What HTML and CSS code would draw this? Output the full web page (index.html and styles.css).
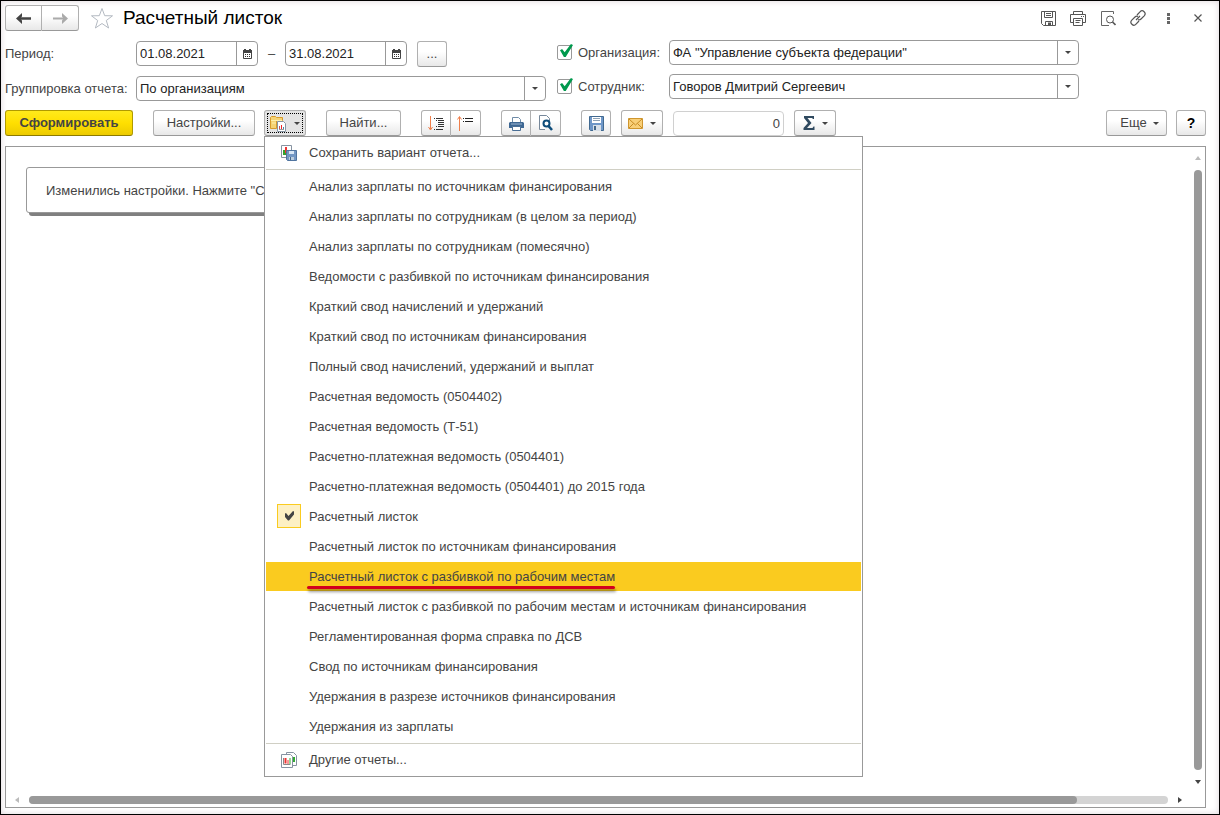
FILE: index.html
```html
<!DOCTYPE html>
<html lang="ru">
<head>
<meta charset="utf-8">
<title>Расчетный листок</title>
<link rel="stylesheet" href="styles.css">
</head>
<body>
<svg class="defs" width="0" height="0" aria-hidden="true">
  <defs>
    <symbol id="calendar" viewBox="0 0 9 10"><path d="M.5 1.500h8v8h-8z" fill="#fff" stroke="#444"/><path d="M0 1h9v3H0z" fill="#444"/><path d="M1 0h2v2H1zM6 0h2v2H6z" fill="#444"/><path d="M2 5h1v1H2zM4 5h1v1H4zM6 5h1v1H6zM2 7h1v1H2zM4 7h1v1H4zM6 7h1v1H6z" fill="#333"/></symbol>
    <symbol id="floppy" viewBox="0 0 15 15"><path d="M.5.5h14v14h-12l-2-2zM3.500.5v6h8v-6M5 2.500h5M5 4.500h5M4.500 14.500v-4h7v4" fill="none" stroke="#555"/><path d="M7 11.500h3v3H7z" fill="#555"/></symbol>
    <symbol id="print-line" viewBox="0 0 16 15"><path d="M3.500 3.500v-3h9v3M3.500 11.500h-3v-8h15v8h-3M3.500 7.500h9v7h-9zM5.500 9.500h5M5.500 11.500h4M11 5.500h1M13 5.500h1" fill="none" stroke="#555"/></symbol>
    <symbol id="preview-line" viewBox="0 0 15 15"><path d="M12.500 3V.5H.5v14H8" fill="none" stroke="#666"/><circle cx="9" cy="8.500" r="3.500" fill="none" stroke="#555"/><path d="M11.500 11l3 3" stroke="#555" stroke-width="1.600"/></symbol>
    <symbol id="link" viewBox="0 0 16 16"><g fill="none" stroke="#555" stroke-width="1.200"><path d="M7 5l3-3.200a2.800 2.800 0 0 1 4.200 4L11 9a2.800 2.800 0 0 1-3 .6"/><path d="M9 11l-3 3.200a2.800 2.800 0 0 1-4.200-4L5 7a2.800 2.800 0 0 1 3-.6M6 10l4-4"/></g></symbol>
  </defs>
</svg>
<main class="window">
  <header class="titlebar">
    <div class="pair nav">
      <button class="btn" aria-label="Назад"><svg width="15" height="11" viewBox="0 0 15 11"><path d="M6 0L0 5.500 6 11 6 7.500 5 6.800H15V4.200H5L6 3.500z" fill="#444"/></svg></button>
      <button class="btn" aria-label="Вперед"><svg width="15" height="11" viewBox="0 0 15 11"><path d="M9 0L15 5.500 9 11 9 7.500 10 6.500H0V4.500H10L9 3.500z" fill="#aaa"/></svg></button>
    </div>
    <button class="plain star" aria-label="Избранное"><svg width="24" height="23" viewBox="0 0 24 23"><path d="M12 1.500l2.700 7.200 7.800.1-6.200 4.700 2.300 7.500L12 16.500 5.400 21l2.300-7.500L1.500 8.800l7.800-.1z" fill="#fff" stroke="#b4bac2"/></svg></button>
    <h1 class="title">Расчетный листок</h1>
    <div class="tools">
      <button class="plain" aria-label="Сохранить"><svg width="15" height="15"><use href="#floppy"/></svg></button>
      <button class="plain" aria-label="Печать"><svg width="16" height="15"><use href="#print-line"/></svg></button>
      <button class="plain" aria-label="Просмотр"><svg width="15" height="15"><use href="#preview-line"/></svg></button>
      <button class="plain" aria-label="Ссылка"><svg width="16" height="16"><use href="#link"/></svg></button>
      <button class="plain" aria-label="Меню"><svg width="3" height="11" viewBox="0 0 3 11"><path d="M0 0h3v3H0zM0 4h3v3H0zM0 8h3v3H0z" fill="#666"/></svg></button>
      <button class="plain" aria-label="Закрыть"><svg width="8" height="8" viewBox="0 0 8 8"><path d="M.5.5l7 7M7.500.5l-7 7" stroke="#555" stroke-width="1.200"/></svg></button>
    </div>
  </header>

  <form class="form">
    <div class="column left">
      <div class="row">
        <label class="caption" for="from">Период:</label>
        <span class="field date"><input id="from" type="text" value="01.08.2021"><button type="button" class="field-btn" aria-label="Календарь"><svg width="9" height="10"><use href="#calendar"/></svg></button></span>
        <span class="dash">–</span>
        <span class="field date"><input type="text" value="31.08.2021" aria-label="Конец периода"><button type="button" class="field-btn" aria-label="Календарь"><svg width="9" height="10"><use href="#calendar"/></svg></button></span>
        <button type="button" class="btn dots">...</button>
      </div>
      <div class="row">
        <label class="caption" for="group">Группировка отчета:</label>
        <span class="field combo"><select id="group"><option>По организациям</option></select><span class="drop"><i class="arrow"></i></span></span>
      </div>
    </div>
    <div class="column right">
      <div class="row">
        <input class="tick" type="checkbox" id="use-org" checked>
        <label class="caption" for="use-org">Организация:</label>
        <span class="field combo"><select aria-label="Организация"><option>ФА "Управление субъекта федерации"</option></select><span class="drop"><i class="arrow"></i></span></span>
      </div>
      <div class="row">
        <input class="tick" type="checkbox" id="use-emp" checked>
        <label class="caption" for="use-emp">Сотрудник:</label>
        <span class="field combo"><select aria-label="Сотрудник"><option>Говоров Дмитрий Сергеевич</option></select><span class="drop"><i class="arrow"></i></span></span>
      </div>
    </div>
  </form>

  <div class="toolbar">
    <button class="btn primary">Сформировать</button>
    <div class="group near">
      <button class="btn settings">Настройки...</button>
      <div class="variants">
        <button class="btn split pressed" aria-label="Варианты отчета" aria-expanded="true">
          <svg width="17" height="17" viewBox="0 0 17 17"><path d="M.5 2.500l1-1h4l1 1h6v3h-6v8h-6z" fill="#f5d373" stroke="#d69b2c"/><path d="M1 5.500h11M2 8h4" stroke="#fff0ad"/><path d="M7.500 6.500h6l2 2v8h-8z" fill="#fff" stroke="#8795a3"/><path d="M9.500 11v3" stroke="#c55"/><path d="M11.500 10v4" stroke="#e22"/><path d="M13.500 12v2" stroke="#48a"/><path d="M9 14.500h5" stroke="#999"/></svg>
          <i class="arrow"></i>
        </button>
        <div class="menu" role="menu">
          <button class="item edge" role="menuitem"><svg width="17" height="17" viewBox="0 0 17 17"><path d="M.5.5h10v12H.5z" fill="#fff" stroke="#8793a1"/><path d="M2 5h3v5H2z" fill="#35a22c"/><path d="M4 2h2v6H4z" fill="#e33"/><path d="M5.500 5.500h10v10h-9l-1-1z" fill="#7397c4" stroke="#50749f"/><path d="M8 6h5v3H8z" fill="#d9e7f5"/><path d="M8 12h5v3H8z" fill="#bccddd"/><path d="M9 12h1v3H9z" fill="#456789"/></svg>Сохранить вариант отчета...</button>
          <div class="list">
            <button class="item" role="menuitem">Анализ зарплаты по источникам финансирования</button>
            <button class="item" role="menuitem">Анализ зарплаты по сотрудникам (в целом за период)</button>
            <button class="item" role="menuitem">Анализ зарплаты по сотрудникам (помесячно)</button>
            <button class="item" role="menuitem">Ведомости с разбивкой по источникам финансирования</button>
            <button class="item" role="menuitem">Краткий свод начислений и удержаний</button>
            <button class="item" role="menuitem">Краткий свод по источникам финансирования</button>
            <button class="item" role="menuitem">Полный свод начислений, удержаний и выплат</button>
            <button class="item" role="menuitem">Расчетная ведомость (0504402)</button>
            <button class="item" role="menuitem">Расчетная ведомость (Т-51)</button>
            <button class="item" role="menuitem">Расчетно-платежная ведомость (0504401)</button>
            <button class="item" role="menuitem">Расчетно-платежная ведомость (0504401) до 2015 года</button>
            <button class="item" role="menuitem"><span class="mark"><svg width="11" height="10" viewBox="0 0 11 10"><path d="M1 2.500l1-.5 2.500 3L9 0l1 .5v3L5 9.500H4L1 6z" fill="#444"/></svg></span>Расчетный листок</button>
            <button class="item" role="menuitem">Расчетный листок по источникам финансирования</button>
            <button class="item active" role="menuitem"><span class="underlined">Расчетный листок с разбивкой по рабочим местам</span></button>
            <button class="item" role="menuitem">Расчетный листок с разбивкой по рабочим местам и источникам финансирования</button>
            <button class="item" role="menuitem">Регламентированная форма справка по ДСВ</button>
            <button class="item" role="menuitem">Свод по источникам финансирования</button>
            <button class="item" role="menuitem">Удержания в разрезе источников финансирования</button>
            <button class="item" role="menuitem">Удержания из зарплаты</button>
          </div>
          <button class="item edge" role="menuitem"><svg width="17" height="17" viewBox="0 0 17 17"><path d="M5.500.5h7l3 3v10h-10z" fill="#fff" stroke="#8793a1"/><path d="M13 5v5" stroke="#3a3" stroke-width="2"/><path d="M.5 2.500h9l2 2v11H.5z" fill="#fff" stroke="#8793a1"/><path d="M2.500 6v6.500h7" fill="none" stroke="#888"/><path d="M4.500 6v5.500" stroke="#e33" stroke-width="2"/><path d="M7 8v4" stroke="#e33"/><path d="M9 6v6" stroke="#3a3"/></svg>Другие отчеты...</button>
        </div>
      </div>
    </div>
    <button class="btn find">Найти...</button>
    <div class="pair">
      <button class="btn" aria-label="Развернуть"><svg width="17" height="17" viewBox="0 0 17 17"><path d="M2.500 1v13M.5 12l2 3 2-3" fill="none" stroke="#ef7f4b"/><path d="M6 3.500h1M8 3.500h7M8 5.500h1M10 5.500h6M10 7.500h6M10 9.500h6M8 11.500h1M10 11.500h6M6 14.500h1M8 14.500h7" stroke="#333"/></svg></button>
      <button class="btn" aria-label="Свернуть"><svg width="17" height="17" viewBox="0 0 17 17"><path d="M2.500 16V2M.5 4.500l2-3 2 3" fill="none" stroke="#ef7f4b"/><path d="M6 3.500h1M8 3.500h8M6 6.500h1M8 6.500h8" stroke="#222"/></svg></button>
    </div>
    <div class="pair">
      <button class="btn" aria-label="Печать"><svg width="15" height="15" viewBox="0 0 15 15"><path d="M3.500 6V1.500h6l2 2V6" fill="#fff" stroke="#6f8ba7"/><path d="M1 6h13l1 1v5H0V7z" fill="#3d6793"/><path d="M2 8h11" stroke="#9cb6d2"/><path d="M3.500 10.500h8v4h-8z" fill="#fff" stroke="#4a6e95"/></svg></button>
      <button class="btn" aria-label="Просмотр"><svg width="15" height="16" viewBox="0 0 15 16"><path d="M11.500 6V3.500l-3-3h-7v14H7" fill="#fff" stroke="#77889a"/><circle cx="8.500" cy="8.500" r="3" fill="#fff" stroke="#0e4d7b" stroke-width="2"/><path d="M10.500 11l3.500 4" stroke="#0e4d7b" stroke-width="2.500"/></svg></button>
    </div>
    <div class="group">
      <button class="btn square" aria-label="Сохранить"><svg width="15" height="15" viewBox="0 0 15 15"><path d="M.5.5h14v14h-13l-1-1z" fill="#6f97c8" stroke="#416990"/><path d="M3 1h9v6H3z" fill="#fff"/><path d="M4 2.500h7M4 4.500h7" stroke="#8da1b5"/><path d="M4 9h8v6H4z" fill="#d8e0e8"/><path d="M5 10h2v4H5z" fill="#446688"/></svg></button>
      <button class="btn split" aria-label="Отправить"><svg width="15" height="11" viewBox="0 0 15 11"><path d="M.5.5h14v10H.5z" fill="#f8cf78" stroke="#cf962e"/><path d="M1 1l6.500 6L14 1M1 10l4.500-4.500M14 10L9.500 5.500" fill="none" stroke="#c78c25"/></svg><i class="arrow"></i></button>
      <input class="total" type="text" value="0" aria-label="Сумма">
      <button class="btn split" aria-label="Итоги"><svg width="12" height="14" viewBox="0 0 12 14"><path d="M1 0h10v3h-1L9 2H4.500l4 5-4.500 5H9.500l1-1.500H11.500V14H.5v-2L5 7 1 2z" fill="#304a60"/></svg><i class="arrow"></i></button>
    </div>
    <div class="group near end">
      <button class="btn more">Еще <i class="arrow"></i></button>
      <button class="btn square help">?</button>
    </div>
  </div>

  <section class="report">
    <div class="sheet"><p class="notice">Изменились настройки. Нажмите "Сформировать" для получения отчета.</p></div>
    <div class="vbar"><i class="tri up"></i><span class="thumb"></span><i class="tri down"></i></div>
    <div class="hbar"><i class="tri back"></i><span class="track"><span class="thumb"></span></span><i class="tri next"></i></div>
  </section>
</main>
</body>
</html>
```
FILE: styles.css
```css
* { box-sizing: border-box; }

body {
  margin: 0;
  font: 13px/16px "Liberation Sans", Arial, sans-serif;
  color: #444;
}

button, input, select { font: inherit; color: inherit; margin: 0; }
svg { display: block; flex: none; }
.defs { position: absolute; }

.window {
  display: flex;
  flex-direction: column;
  min-height: 100vh;
  padding: 4px 13px 6px 4px;
  border: 1px solid #000;
  background: #fff;
  box-shadow: inset 0 0 6px #ddd5da;
}

/* buttons */
.btn {
  display: flex;
  align-items: center;
  justify-content: center;
  height: 26px;
  padding: 0;
  border: 1px solid #b0b0b0;
  border-bottom-color: #999;
  border-radius: 3px;
  background: linear-gradient(#fff 40%, #e8e8e8);
  white-space: nowrap;
}
.plain {
  display: flex;
  align-items: center;
  justify-content: center;
  padding: 0;
  border: 0;
  background: none;
}
.pair { display: flex; }
.pair .btn { width: 30px; }
.pair .btn:first-child { border-radius: 3px 0 0 3px; }
.pair .btn:last-child { border-left: 0; border-radius: 0 3px 3px 0; }
.square { width: 30px; }
.split { width: 42px; gap: 7px; }
.arrow {
  width: 0;
  height: 0;
  border: 3px solid transparent;
  border-top-color: #444;
  border-bottom: 0;
}

/* title */
.titlebar { display: flex; align-items: center; height: 26px; }
.nav .btn { width: 37px; }
.star { margin-left: 11px; }
.title {
  flex: 1;
  margin: 0 0 0 9px;
  font-size: 19px;
  line-height: 24px;
  font-weight: 400;
  color: #000;
}
.tools { display: flex; margin-right: -7px; }
.tools .plain { width: 30px; height: 26px; }

/* parameters */
.form {
  display: grid;
  grid-template-columns: minmax(0, 541fr) minmax(0, 522fr) minmax(0, 116fr);
  column-gap: 11px;
  margin-top: 9px;
}
.column { display: flex; flex-direction: column; gap: 9px; }
.left { padding-top: 1px; gap: 10px; }
.row { display: flex; align-items: center; height: 25px; }
.left .caption { width: 131px; }
.right .caption { width: 97px; padding-left: 6px; }
.field {
  display: flex;
  height: 25px;
  border: 1px solid #999;
  border-radius: 4px;
  background: #fff;
  overflow: hidden;
  color: #222;
}
.field input {
  flex: 1;
  min-width: 0;
  padding: 0 3px;
  border: 0;
  background: none;
}
.date { width: 122px; }
.field-btn {
  display: flex;
  align-items: center;
  justify-content: center;
  width: 21px;
  padding: 0;
  border: 0;
  border-left: 1px solid #999;
  background: none;
}
.dash { width: 27px; text-align: center; }
.dots { width: 30px; margin-left: 10px; }
.combo { flex: 1; display: grid; grid-template-columns: minmax(0, 1fr) 21px; }
.combo select {
  grid-area: 1 / 1 / 2 / 3;
  appearance: none;
  padding: 0 24px 0 3px;
  border: 0;
  background: none;
}
.drop {
  grid-area: 1 / 2;
  display: flex;
  align-items: center;
  justify-content: center;
  border-left: 1px solid #999;
  pointer-events: none;
}
.tick {
  appearance: none;
  flex: none;
  width: 15px;
  height: 15px;
  border: 1px solid #999;
  border-radius: 2px;
}
.tick:checked::before {
  content: "";
  display: block;
  width: 13px;
  height: 13px;
  margin: -2px 0 0 2px;
  background: #00994d;
  clip-path: polygon(0 48%, 16% 38%, 36% 64%, 84% 0, 100% 8%, 44% 100%, 30% 100%);
}

/* toolbar */
.toolbar { display: flex; gap: 20px; margin-top: 9px; }
.group { display: flex; gap: 10px; }
.near { gap: 9px; }
.end { margin-left: auto; }
.primary {
  width: 128px;
  border-color: #b09a00;
  border-bottom-color: #8c7a00;
  background: linear-gradient(#ffea1c, #ffdf00 50%, #edcb00);
  font-weight: 700;
}
.settings { width: 102px; }
.find { width: 75px; }
.pressed {
  background: #e4e4e4;
  outline: 1px dotted #000;
  outline-offset: -4px;
}
.total {
  width: 111px;
  height: 25px;
  margin-top: 1px;
  padding: 0 3px;
  border: 1px solid #d0d0d0;
  border-radius: 4px;
  text-align: right;
}
.more { width: 61px; gap: 6px; padding-left: 6px; }
.help { color: #000; font-size: 14px; font-weight: 700; }

/* drop-down list of report variants */
.variants { position: relative; }
.menu {
  position: absolute;
  z-index: 2;
  top: 100%;
  left: 0;
  width: 599px;
  padding: 0 1px;
  border: 1px solid #999;
  background: #fff;
}
.item {
  display: flex;
  align-items: center;
  width: 100%;
  height: 30px;
  padding: 0 0 0 43px;
  border: 0;
  background: none;
  text-align: left;
  white-space: nowrap;
}
.edge { height: 32px; gap: 11px; padding-left: 15px; }
.list {
  padding: 2px 0 1px;
  border: solid #d0cfc4;
  border-width: 1px 0;
}
.active {
  background: linear-gradient(#facb1f, #facb1f) 0 0 / 100% 29px no-repeat;
}
.mark {
  display: flex;
  align-items: center;
  justify-content: center;
  width: 24px;
  height: 24px;
  margin: 0 8px 2px -32px;
  border: 1px solid #facb1f;
  background: #fdf0c4;
}
.underlined { position: relative; }
.underlined::after {
  content: "";
  position: absolute;
  left: -2px;
  right: 0;
  bottom: -4px;
  height: 3px;
  border-radius: 2px;
  background: #d2001e;
  box-shadow: 1px 3px 3px rgba(0, 0, 0, .4);
}

/* report sheet */
.report {
  flex: 1;
  display: grid;
  grid-template-columns: minmax(0, 1fr) 15px;
  grid-template-rows: 1fr 15px;
  margin-top: 10px;
  border: 1px solid #999;
}
.sheet { padding: 20px; overflow: hidden; }
.notice {
  width: max-content;
  margin: 0;
  padding: 15px 19px 13px;
  border: 1px solid #999;
  border-radius: 3px;
  box-shadow: 3px 3px 0 #808080;
}
.vbar {
  display: flex;
  flex-direction: column;
  align-items: center;
  padding-top: 9px;
}
.vbar .thumb {
  flex: 1;
  width: 8px;
  margin: 10px 0;
  border-radius: 4px;
  background: #999;
}
.hbar {
  grid-column: 1 / 3;
  display: flex;
  align-items: center;
  padding: 0 23px 0 9px;
}
.track {
  flex: 1;
  height: 8px;
  margin: 0 10px;
  border-radius: 4px;
  background: #d4d4d4;
}
.track .thumb {
  display: block;
  width: 92%;
  height: 8px;
  border-radius: 4px;
  background: #999;
}
.tri { border: 3px solid transparent; }
.up { border-top: 0; border-bottom: 4px solid #bbb; }
.down { margin-bottom: 8px; border-bottom: 0; border-top: 4px solid #444; }
.back { border-left: 0; border-right: 4px solid #bbb; }
.next { border-right: 0; border-left: 4px solid #444; }
```
